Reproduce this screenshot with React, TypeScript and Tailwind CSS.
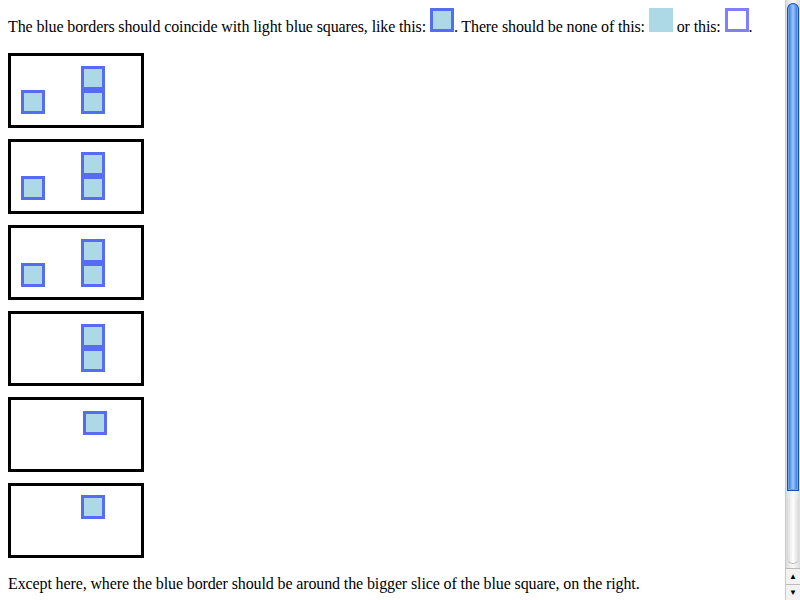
import React from 'react';

const sq = 'box-border inline-block w-6 h-6 border-[3px] border-[rgba(0,0,255,0.5)] bg-[lightblue]';

function Stack() {
  return (
    <div className="flex flex-col">
      <div className={sq} />
      <div className={sq} />
    </div>
  );
}

function Box({ children, className = '' }: { children?: React.ReactNode; className?: string }) {
  return (
    <div className={`box-border flex w-[136px] h-[75px] border-[3px] border-black ${className}`}>
      {children}
    </div>
  );
}

function Scrollbar() {
  return (
    <div className="w-[15px] h-full flex flex-col border-l border-[#c8c8c8] bg-gradient-to-r from-[#dcdcdc] via-[#fafafa] to-[#dcdcdc]">
      <div className="flex-1 flex flex-col px-[1px] pt-[3px]">
        <div className="h-[488px] rounded-t-full rounded-b-[7px] border border-[#1c4fb8] bg-gradient-to-r from-[#2a6ad8] via-[#9cc8f8] to-[#2a6ad8] shadow-[inset_0_0_0_1px_#6aa4ee]" />
        <div className="flex-1 mt-2 mb-1 rounded-b-full bg-gradient-to-r from-[#d8d8d8] via-white to-[#d8d8d8] border-b border-[#bdbdbd]" />
      </div>
      <div className="h-4 flex items-center justify-center border-t border-[#bbb] bg-[#f2f2f2] text-[8px] leading-none text-black">▲</div>
      <div className="h-4 flex items-center justify-center border-t border-[#bbb] bg-[#f2f2f2] text-[8px] leading-none text-black">▼</div>
    </div>
  );
}

export default function App() {
  return (
    <div className="w-[800px] h-[600px] flex overflow-hidden bg-white text-black [font-family:Liberation_Serif,serif] text-[16px] tracking-[-0.12px]">
      <div className="flex-1 overflow-hidden p-2">
        <p className="mb-[17px] leading-[18px]">
          The blue borders should coincide with light blue squares, like this: <span className={sq} />. There should be none of this:{' '}
          <span className="inline-block w-6 h-6 bg-[lightblue]" /> or this:{' '}
          <span className="box-border inline-block w-6 h-6 border-[3px] border-[rgba(0,0,255,0.5)]" />.
        </p>

        <div className="flex flex-col gap-[11px]">
          <Box className="items-end pl-[10px] pb-[11px] gap-9">
            <div className={sq} />
            <Stack />
          </Box>
          <Box className="items-end pl-[10px] pb-[11px] gap-9">
            <div className={sq} />
            <Stack />
          </Box>
          <Box className="items-end pl-[10px] pb-[10px] gap-9">
            <div className={sq} />
            <Stack />
          </Box>
          <Box className="items-start pl-[70px] pt-[10px]">
            <Stack />
          </Box>
          <Box className="items-start pl-[72px] pt-[11px]">
            <div className={sq} />
          </Box>
          <Box className="items-start pl-[70px] pt-[9px]">
            <div className={sq} />
          </Box>
        </div>

        <p className="mt-[17px] leading-[18px]">
          Except here, where the blue border should be around the bigger slice of the blue square, on the right.
        </p>
      </div>
      <Scrollbar />
    </div>
  );
}
